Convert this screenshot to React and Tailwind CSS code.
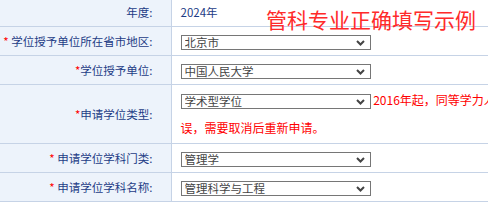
import React from 'react';

const rows = [
    { star: '', label: '年度:', value: '2024年' },
    { star: '* ', label: '学位授予单位所在省市地区:', select: '北京市' },
    { star: '*', label: '学位授予单位:', select: '中国人民大学' },
    { star: '*', label: '申请学位类型:', select: '学术型学位', note: true },
    { star: '* ', label: '申请学位学科门类:', select: '管理学' },
    { star: '* ', label: '申请学位学科名称:', select: '管理科学与工程' },
];

function Select({ value }) {
    return (
        <span className="relative inline-block align-middle w-[190px] h-[15px]">
            <select
                defaultValue={value}
                className="appearance-none block w-full h-full border border-[#767676] bg-white pl-[3px] text-[11.5px] leading-[13px] text-[#444] outline-none"
            >
                <option>{value}</option>
            </select>
            {/* dropdown chevron */}
            <svg className="absolute right-[6px] top-[5px] pointer-events-none" width="9" height="6" viewBox="0 0 9 6">
                <path d="M1 1l3.5 3.5L8 1" fill="none" stroke="#444" strokeWidth="2" />
            </svg>
        </span>
    );
}

export default function App() {
    return (
        <div className="relative w-[488px] h-[204px] overflow-hidden bg-white font-['Noto_Sans_CJK_SC',sans-serif]">
            <table className="border-collapse -mt-[2px] w-[760px]">
                <tbody>
                    {rows.map((row, i) => (
                        <tr key={i} className="border-b border-[#c6d3e6]">
                            <td className="w-[171px] bg-[#edf3fb] border-r border-[#c6d3e6] text-right pr-[18px] text-[11.5px] leading-[28px] text-[#1d3c86] whitespace-nowrap align-middle">
                                {row.star && <span className="text-[#ff0000]">{row.star}</span>}
                                {row.label}
                            </td>
                            <td className={`pl-[9px] text-[11.5px] leading-[28px] text-[#1d3c86] whitespace-nowrap align-middle ${row.note ? 'py-px' : ''}`}>
                                {row.value}
                                {row.select && <Select value={row.select} />}
                                {row.note && (
                                    <span className="text-[#ff0000] text-[12px]">
                                        {' '}2016年起，同等学力人员申请学位类型请选择同等学力，若选择错
                                        <br />
                                        误，需要取消后重新申请。
                                    </span>
                                )}
                            </td>
                        </tr>
                    ))}
                </tbody>
            </table>

            <div className="absolute left-[266px] top-[7px] text-[21px] leading-[24px] text-[#ff2a2a] whitespace-nowrap">
                管科专业正确填写示例
            </div>
        </div>
    );
}
